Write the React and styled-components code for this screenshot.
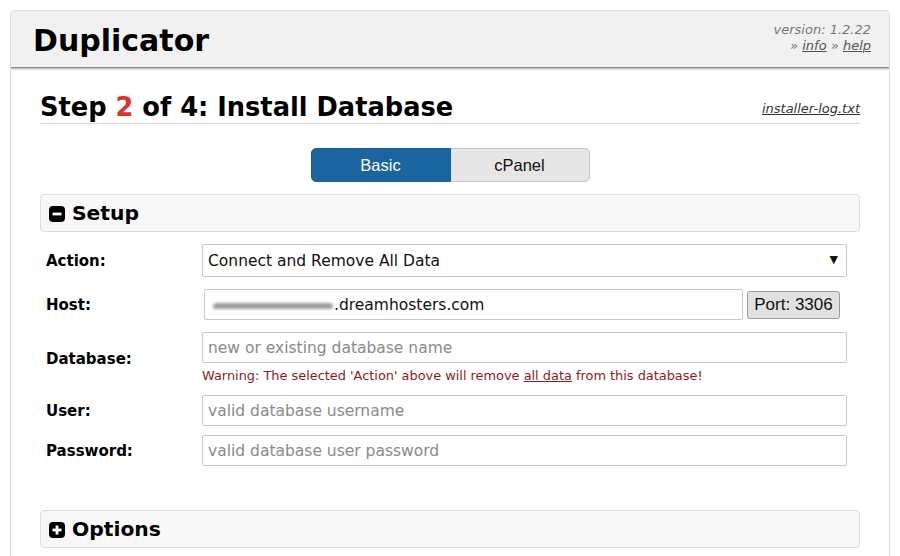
import React from "react";
import styled, { createGlobalStyle } from "styled-components";

const Global = createGlobalStyle`
  html, body { margin: 0; padding: 0; background: #fff; }
  body { font-family: "DejaVu Sans", Verdana, sans-serif; color: #000; }
`;

const Frame = styled.div`
  margin: 10px 10px 0 10px;
  width: 878px;
  height: 546px;
  border: 1px solid #dcdcdc;
  border-bottom: none;
  border-radius: 5px 5px 0 0;
  overflow: hidden;
  box-sizing: content-box;
`;

const Header = styled.div`
  height: 56px;
  background: #f1f1f1;
  border-bottom: 1px solid #8a8a8a;
  box-shadow: 0 1px 2px rgba(0,0,0,0.35);
  display: flex;
  align-items: center;
  justify-content: space-between;
  padding: 0 18px 0 22px;
`;

const Brand = styled.div`
  font-family: "DejaVu Sans", Verdana, sans-serif;
  font-weight: bold;
  font-size: 30px;
  margin-top: 3px;
`;

const Meta = styled.div`
  text-align: right;
  font-style: italic;
  font-size: 13px;
  line-height: 16px;
  color: #777;
  margin-top: -2px;
`;

const MetaLink = styled.a`
  color: #555;
  text-decoration: underline;
`;

const Content = styled.div`
  padding: 0 29px 0 29px;
`;

const TitleRow = styled.div`
  display: flex;
  justify-content: space-between;
  align-items: flex-end;
  margin-top: 24px;
  padding-bottom: 1px;
  border-bottom: 1px solid #d7d7d7;
`;

const Title = styled.h1`
  margin: 0;
  font-size: 25.7px;
  line-height: 30px;
  font-weight: bold;
`;

const Num = styled.span`
  color: #d9342b;
`;

const LogLink = styled.a`
  font-style: italic;
  font-size: 13px;
  color: #333;
  text-decoration: underline;
  margin-bottom: 6px;
`;

const Toggle = styled.div`
  display: flex;
  justify-content: center;
  margin-top: 24px;
`;

const ToggleBtn = styled.div`
  width: 138px;
  height: 32px;
  display: flex;
  align-items: center;
  justify-content: center;
  font-family: "Liberation Sans", Arial, sans-serif;
  font-size: 16.5px;
  border: 1px solid ${p => (p.$active ? "#1a5f96" : "#c6c6c6")};
  background: ${p => (p.$active ? "#1a64a0" : "#e6e6e6")};
  color: ${p => (p.$active ? "#fff" : "#111")};
  border-radius: ${p => (p.$first ? "5px 0 0 5px" : "0 5px 5px 0")};
  ${p => (p.$first ? "" : "border-left: none;")}
`;

const Section = styled.div`
  margin-top: ${p => p.$mt}px;
  height: 36px;
  border: 1px solid #dedede;
  border-radius: 4px;
  background: #f8f8f8;
  display: flex;
  align-items: center;
  padding-left: 8px;
  gap: 7px;
  font-weight: bold;
  font-size: 20.3px;
`;

const SqIcon = styled.svg`
  width: 16px;
  height: 16px;
  flex: none;
  margin-top: 1px;
`;

const Form = styled.div`
  padding-left: 6px;
`;

const Row = styled.div`
  display: flex;
  align-items: center;
  margin-top: ${p => p.$mt}px;
`;

const Label = styled.div`
  width: 156px;
  flex: none;
  font-weight: bold;
  font-size: 15px;
`;

const Field = styled.div`
  flex: none;
  width: 645px;
  display: flex;
  flex-direction: column;
`;

const Box = styled.div`
  box-sizing: border-box;
  height: ${p => p.$h || 30}px;
  width: ${p => (p.$w ? p.$w + "px" : "100%")};
  margin-left: ${p => p.$ml || 0}px;
  border: 1px solid #c8c8c8;
  border-radius: 2px;
  background: #fff;
  display: flex;
  align-items: center;
  padding: 0 8px 0 5px;
  font-size: 15.5px;
  color: ${p => (p.$ph ? "#8a8a8a" : "#111")};
  justify-content: ${p => (p.$start ? "flex-start" : "space-between")};
`;

const Arrow = styled.span`
  font-size: 11px;
  color: #111;
  margin-top: -2px;
`;

const HostLine = styled.div`
  display: flex;
  align-items: center;
  gap: 4px;
`;

const Blur = styled.span`
  display: inline-block;
  width: 120px;
  height: 6px;
  background: #9c9c9c;
  border-radius: 3px;
  filter: blur(1.5px);
  margin: 3px 1px 0 3px;
`;

const PortBtn = styled.div`
  box-sizing: border-box;
  width: 93px;
  height: 28px;
  border: 1px solid #9a9a9a;
  border-radius: 3px;
  background: #e1e1e1;
  font-family: "Liberation Sans", Arial, sans-serif;
  font-size: 17px;
  display: flex;
  align-items: center;
  justify-content: center;
  color: #111;
`;

const Warn = styled.div`
  font-size: 12.9px;
  color: #8b1c1c;
  line-height: 18px;
  margin-top: 4px;
`;

const WarnLink = styled.span`
  text-decoration: underline;
`;

function Square({ plus }) {
  return (
    <SqIcon viewBox="0 0 16 16">
      <rect x="0" y="0" width="16" height="16" rx="4" fill="#000" />
      <rect x="3.5" y="6.6" width="9" height="2.8" fill="#fff" />
      {plus && <rect x="6.6" y="3.5" width="2.8" height="9" fill="#fff" />}
    </SqIcon>
  );
}

export default function App() {
  return (
    <>
      <Global />
      <Frame>
        <Header>
          <Brand>Duplicator</Brand>
          <Meta>
            <div>version: 1.2.22</div>
            <div>» <MetaLink>info</MetaLink> » <MetaLink>help</MetaLink></div>
          </Meta>
        </Header>
        <Content>
          <TitleRow>
            <Title>Step <Num>2</Num> of 4: Install Database</Title>
            <LogLink>installer-log.txt</LogLink>
          </TitleRow>
          <Toggle>
            <ToggleBtn $active $first>Basic</ToggleBtn>
            <ToggleBtn>cPanel</ToggleBtn>
          </Toggle>
          <Section $mt={12}><Square />Setup</Section>
          <Form>
            <Row $mt={12}>
              <Label>Action:</Label>
              <Field>
                <Box $h={33}>Connect and Remove All Data<Arrow>▼</Arrow></Box>
              </Field>
            </Row>
            <Row $mt={12}>
              <Label>Host:</Label>
              <HostLine>
                <Box $w={539} $ml={2} $h={31} $start>
                  <Blur />.dreamhosters.com
                </Box>
                <PortBtn>Port: 3306</PortBtn>
              </HostLine>
            </Row>
            <Row $mt={12}>
              <Label>Database:</Label>
              <Field>
                <Box $ph $w={645} $h={31}>new or existing database name</Box>
                <Warn>Warning: The selected 'Action' above will remove <WarnLink>all data</WarnLink> from this database!</Warn>
              </Field>
            </Row>
            <Row $mt={10}>
              <Label>User:</Label>
              <Field><Box $ph $h={31}>valid database username</Box></Field>
            </Row>
            <Row $mt={9}>
              <Label>Password:</Label>
              <Field><Box $ph $h={31}>valid database user password</Box></Field>
            </Row>
          </Form>
          <Section $mt={44}><Square plus />Options</Section>
        </Content>
      </Frame>
    </>
  );
}
